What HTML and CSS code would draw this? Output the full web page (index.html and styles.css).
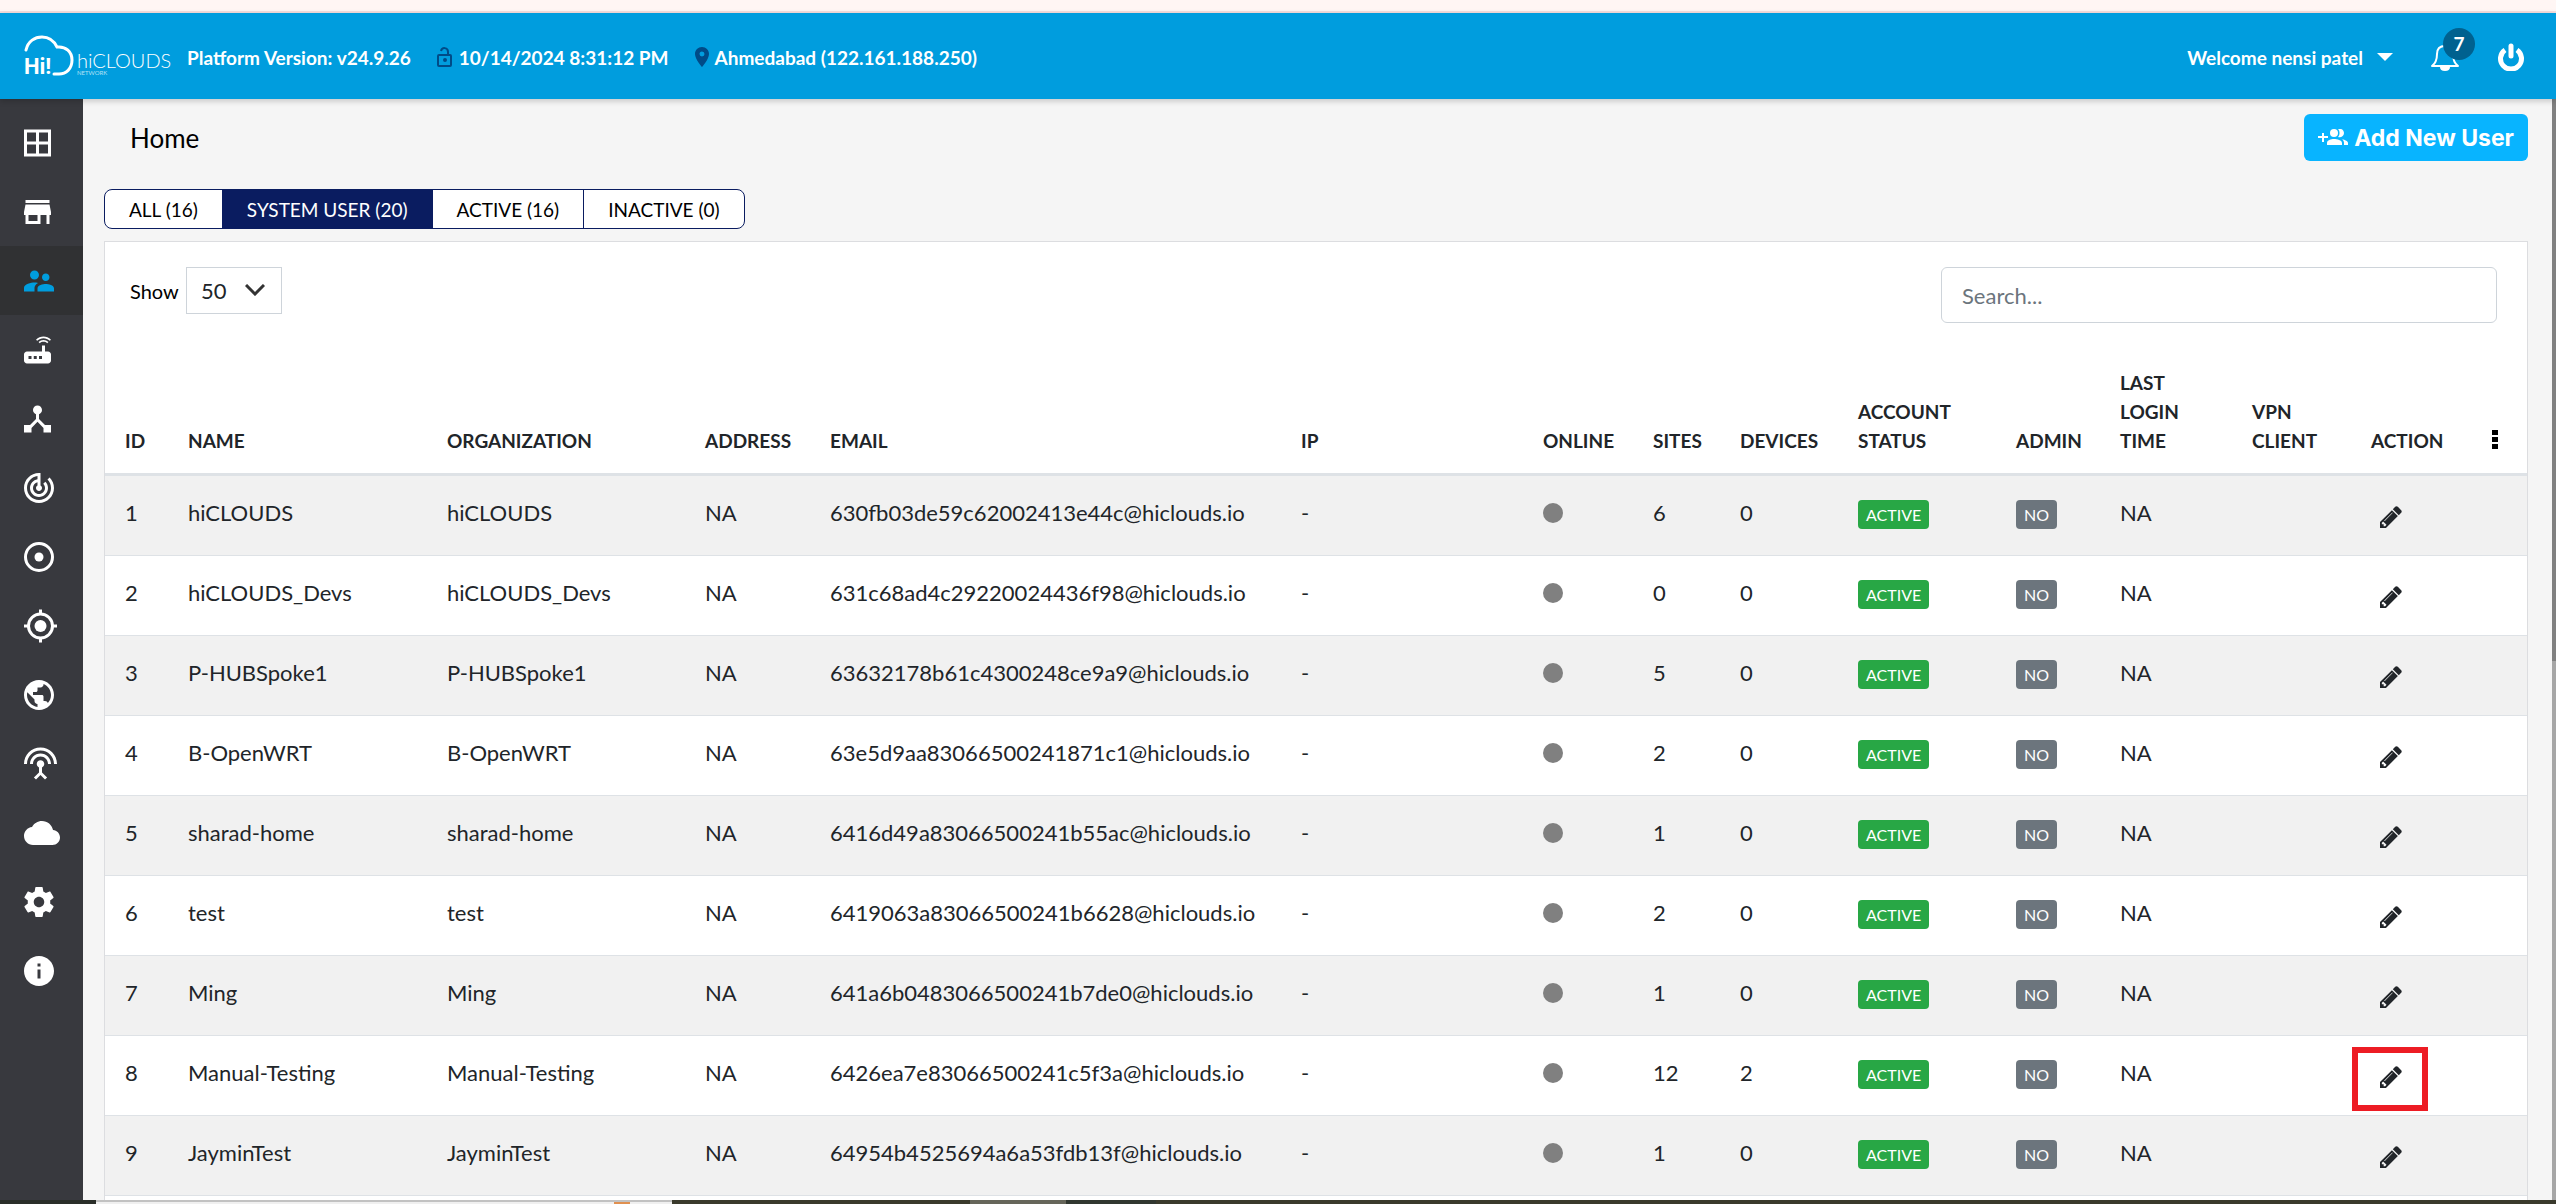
FILE: index.html
```html
<!DOCTYPE html>
<html lang="en">
<head>
<meta charset="utf-8">
<title>hiCLOUDS - Users</title>
<link rel="stylesheet" href="styles.css">
</head>
<body>
<svg class="sprite" aria-hidden="true">
  <symbol id="pencil" viewBox="128 128 1536 1536"><path d="M491 1536l91-91-235-235-91 91v107h128v128h107zm523-928q0-22-22-22-10 0-17 7l-542 542q-7 7-7 17 0 22 22 22 10 0 17-7l542-542q7-7 7-17zm-54-192l416 416-832 832h-416v-416zm683 96q0 53-37 90l-166 166-416-416 166-165q36-38 90-38 53 0 91 38l235 234q37 39 37 91z"/></symbol>
</svg>
<div class="page-edge"></div>
<header class="topbar">
  <a class="logo" href="#" aria-label="hiCLOUDS Network">
    <svg width="148" height="48" viewBox="0 0 148 48">
      <path d="M2 17C4 8 11 4 18 4c7 0 12 4 15 10 9-1 15 5 15 13 0 9-6 14-13 14h-5" fill="none" stroke="#fff" stroke-width="3" stroke-linecap="round"/>
      <text class="logo-hi" x="0" y="41">Hi!</text>
      <text class="logo-name" x="53" y="35">hiCLOUDS</text>
      <text class="logo-sub" x="53" y="42">NETWORK</text>
    </svg>
  </a>
  <span class="info">Platform Version: v24.9.26</span>
  <span class="info info-icon">
    <svg width="16" height="20" viewBox="0 0 16 20" fill="none" stroke="#004b87" stroke-width="2"><rect x="1" y="8" width="13" height="11" rx="1"/><path d="M4 4c1-4 7-4 7 1v3"/><circle cx="8" cy="13" r="1"/></svg>
    10/14/2024 8:31:12 PM</span>
  <span class="info info-icon">
    <svg width="14" height="20" viewBox="5 2 14 20" fill="#004b87"><path d="M12 2C8.13 2 5 5.13 5 9c0 5.25 7 13 7 13s7-7.75 7-13c0-3.87-3.13-7-7-7zm0 9.5a2.5 2.5 0 0 1 0-5 2.5 2.5 0 0 1 0 5z"/></svg>
    Ahmedabad (122.161.188.250)</span>
  <button class="welcome" type="button">Welcome nensi patel <span class="caret"></span></button>
  <button class="bell" type="button" aria-label="Notifications">
    <svg width="28" height="28" viewBox="0 0 28 28" fill="none" stroke="#fff" stroke-width="2" stroke-linejoin="round"><path d="M1 23c4-3 5-6 5-12 0-5 3-8 8-8s8 3 8 8c0 6 1 9 5 12z"/><path d="M10 24c0 4 8 4 8 0z" fill="#fff"/></svg>
    <span class="count">7</span>
  </button>
  <button class="power" type="button" aria-label="Log out">
    <svg width="28" height="28" viewBox="0 0 28 28" fill="none" stroke="#fff" stroke-width="5"><path d="M8 7a10.500 10.500 0 1 0 12 0"/><path d="M14 3v10" stroke-linecap="round"/></svg>
  </button>
</header>
<div class="body">
  <nav class="sidebar" aria-label="Main">
    <a href="#" aria-label="Dashboard"><svg viewBox="3 0 24 24"><path d="M3 3v18h18V3H3zm8 16H5v-6h6v6zm0-8H5V5h6v6zm8 8h-6v-6h6v6zm0-8h-6V5h6v6z"/></svg></a>
    <a href="#" aria-label="Sites"><svg viewBox="3 0 24 24"><path d="M20 4H4v2h16V4zm1 10v-2l-1-5H4l-1 5v2h1v6h10v-6h4v6h2v-6h1zm-9 4H6v-4h6v4z"/></svg></a>
    <a href="#" class="current" aria-label="Users"><svg viewBox="2 0 24 24"><path d="M16.500 12c1.380 0 2.490-1.120 2.490-2.500S17.880 7 16.500 7C15.120 7 14 8.120 14 9.500s1.120 2.500 2.500 2.500zM9 11c1.660 0 2.990-1.340 2.990-3S10.660 5 9 5C7.340 5 6 6.340 6 8s1.340 3 3 3zm7.500 3c-1.830 0-5.500.92-5.500 2.750V19h11v-2.250c0-1.830-3.670-2.750-5.500-2.750zM9 13c-2.330 0-7 1.170-7 3.500V19h7v-2.250c0-.85.33-2.340 2.370-3.470C10.500 13.100 9.660 13 9 13z"/></svg></a>
    <a href="#" aria-label="Devices"><svg viewBox="3 0 24 24"><path d="M20.200 5.900l.8-.8C19.600 3.700 17.800 3 16 3s-3.600.7-5 2.100l.8.8C13 4.800 14.500 4.200 16 4.200s3 .6 4.200 1.700zm-.9.8c-.9-.9-2.100-1.400-3.300-1.400s-2.400.5-3.300 1.400l.8.8c.7-.7 1.600-1 2.500-1 .9 0 1.800.3 2.500 1l.8-.8zM19 13h-2V9h-2v4H5c-1.100 0-2 .9-2 2v4c0 1.100.9 2 2 2h14c1.100 0 2-.9 2-2v-4c0-1.100-.9-2-2-2zM8 18H6v-2h2v2zm3.500 0h-2v-2h2v2zm3.500 0h-2v-2h2v2z"/></svg></a>
    <a href="#" aria-label="Network"><svg viewBox="3 0 24 24"><path d="M17 16l-4-4V8.820C14.160 8.400 15 7.300 15 6c0-1.660-1.340-3-3-3S9 4.340 9 6c0 1.300.84 2.400 2 2.820V12l-4 4H3v5h5v-3.050l4-4.200 4 4.200V21h5v-5h-4z"/></svg></a>
    <a href="#" aria-label="Tracking"><svg viewBox="2 0 24 24"><path d="M19.070 4.930l-1.410 1.410C19.100 7.790 20 9.790 20 12c0 4.420-3.580 8-8 8s-8-3.580-8-8c0-4.080 3.050-7.440 7-7.930v2.020C8.160 6.570 6 9.030 6 12c0 3.310 2.690 6 6 6s6-2.690 6-6c0-1.660-.67-3.160-1.760-4.240l-1.410 1.410C15.550 9.900 16 10.900 16 12c0 2.210-1.790 4-4 4s-4-1.790-4-4c0-1.860 1.280-3.410 3-3.860v2.140c-.6.35-1 .98-1 1.720 0 1.100.9 2 2 2s2-.9 2-2c0-.74-.4-1.380-1-1.720V2h-1C6.480 2 2 6.480 2 12s4.480 10 10 10 10-4.480 10-10c0-2.760-1.120-5.260-2.930-7.070z"/></svg></a>
    <a href="#" aria-label="Monitoring"><svg viewBox="2 0 24 24"><circle cx="12" cy="12" r="9" fill="none" stroke="#fff" stroke-width="2"/><circle cx="12" cy="12" r="3"/></svg></a>
    <a href="#" aria-label="Location"><svg viewBox="1 0 24 24"><circle cx="12" cy="12" r="8" fill="none" stroke="#fff" stroke-width="2"/><circle cx="12" cy="12" r="4"/><path d="M11 1h2v3h-2zM11 20h2v3h-2zM1 11h3v2H1zM20 11h3v2h-3z"/></svg></a>
    <a href="#" aria-label="Public"><svg viewBox="2 0 24 24"><path d="M12 2C6.480 2 2 6.480 2 12s4.480 10 10 10 10-4.480 10-10S17.520 2 12 2zm-1 17.930c-3.950-.49-7-3.850-7-7.930 0-.62.08-1.210.21-1.790L9 15v1c0 1.100.9 2 2 2v1.930zm6.900-2.540c-.26-.81-1-1.390-1.900-1.390h-1v-3c0-.55-.45-1-1-1H8v-2h2c.55 0 1-.45 1-1V7h2c1.100 0 2-.9 2-2v-.41c2.930 1.190 5 4.060 5 7.410 0 2.080-.8 3.970-2.100 5.390z"/></svg></a>
    <a href="#" aria-label="Antenna"><svg viewBox="1 0 24 24"><path d="M12 5c-3.870 0-7 3.130-7 7h2c0-2.760 2.240-5 5-5s5 2.240 5 5h2c0-3.870-3.130-7-7-7zm1 9.290c.88-.39 1.500-1.260 1.500-2.290 0-1.380-1.120-2.500-2.500-2.500S9.500 10.620 9.500 12c0 1.020.62 1.900 1.500 2.290v3.300L7.590 21 9 22.410l3-3 3 3L16.410 21 13 17.590v-3.300zM12 1C5.930 1 1 5.930 1 12h2c0-4.970 4.030-9 9-9s9 4.030 9 9h2c0-6.070-4.930-11-11-11z"/></svg></a>
    <a href="#" aria-label="Cloud"><svg viewBox="0 0 24 24"><path d="M19.350 10.040C18.670 6.590 15.640 4 12 4 9.110 4 6.600 5.640 5.350 8.040 2.340 8.360 0 10.910 0 14c0 3.310 2.690 6 6 6h13c2.760 0 5-2.240 5-5 0-2.640-2.050-4.780-4.650-4.960z"/></svg></a>
    <a href="#" aria-label="Settings"><svg viewBox="2 0 24 24"><path d="M19.430 12.980c.04-.32.07-.64.07-.98s-.03-.66-.07-.98l2.110-1.650c.19-.15.24-.42.12-.64l-2-3.460c-.12-.22-.39-.3-.61-.22l-2.490 1c-.52-.4-1.080-.73-1.690-.98l-.38-2.650C14.460 2.180 14.250 2 14 2h-4c-.25 0-.46.18-.49.42l-.38 2.650c-.61.25-1.170.59-1.690.98l-2.490-1c-.23-.09-.49 0-.61.22l-2 3.460c-.13.22-.07.49.12.64l2.110 1.650c-.04.32-.07.65-.07.98s.03.66.07.98l-2.110 1.650c-.19.15-.24.42-.12.64l2 3.460c.12.22.39.3.61.22l2.490-1c.52.4 1.080.73 1.690.98l.38 2.650c.03.24.24.42.49.42h4c.25 0 .46-.18.49-.42l.38-2.650c.61-.25 1.170-.59 1.690-.98l2.490 1c.23.09.49 0 .61-.22l2-3.460c.12-.22.07-.49-.12-.64l-2.110-1.650zM12 15.500c-1.930 0-3.500-1.570-3.500-3.500s1.570-3.500 3.500-3.500 3.500 1.570 3.500 3.500-1.570 3.500-3.500 3.500z"/></svg></a>
    <a href="#" aria-label="About"><svg viewBox="2 0 24 24"><path d="M12 2C6.480 2 2 6.480 2 12s4.480 10 10 10 10-4.480 10-10S17.520 2 12 2zm1 15h-2v-6h2v6zm0-8h-2V7h2v2z"/></svg></a>
  </nav>
  <main class="content">
    <div class="title-row">
      <h1>Home</h1>
      <button class="add-user" type="button">
        <svg width="30" height="17" viewBox="0 0 30 17" fill="#fff"><path d="M4 4h2v3h4v2H6v4H4V9H0V7h4z"/><circle cx="16" cy="4" r="4"/><path d="M9 16v-2c0-3 4-4 7-4s8 1 8 4v2zM20 0c3-1 6 1 6 4s-3 5-6 4c2-2 2-6 0-8zM24 10c3 1 6 2 6 4v2h-4v-2c0-2-1-3-2-4z"/></svg>
        Add New User</button>
    </div>
    <div class="tabs">
      <button type="button">ALL (16)</button>
      <button type="button" class="selected">SYSTEM USER (20)</button>
      <button type="button">ACTIVE (16)</button>
      <button type="button">INACTIVE (0)</button>
    </div>
    <section class="card">
      <div class="toolbar">
        <label for="page-size">Show</label>
        <span class="select-box">
          <select id="page-size"><option>50</option></select>
          <svg width="20" height="12" viewBox="0 0 20 12" fill="none" stroke="#333" stroke-width="3"><path d="M1 1l9 9 9-9"/></svg>
        </span>
        <input class="search" type="search" placeholder="Search..." aria-label="Search">
      </div>
      <table>
        <colgroup>
          <col class="w-id"><col class="w-name"><col class="w-org"><col class="w-address"><col class="w-email"><col class="w-ip"><col class="w-online"><col class="w-sites"><col class="w-devices"><col class="w-status"><col class="w-admin"><col class="w-login"><col class="w-vpn"><col class="w-action"><col class="w-more">
        </colgroup>
        <thead><tr><th>ID</th><th>NAME</th><th>ORGANIZATION</th><th>ADDRESS</th><th>EMAIL</th><th>IP</th><th>ONLINE</th><th>SITES</th><th>DEVICES</th><th>ACCOUNT STATUS</th><th>ADMIN</th><th>LAST LOGIN TIME</th><th>VPN CLIENT</th><th>ACTION</th><th><button class="more" type="button" aria-label="Columns"><svg width="6" height="22" viewBox="0 0 6 22"><path d="M0 1h6v5H0zM0 8h6v5H0zM0 15h6v5H0z"/></svg></button></th></tr></thead>
        <tbody id="rows"></tbody>
      </table>
    </section>
  </main>
  <div class="scrollbar"><div class="thumb"></div></div>
</div>
<footer class="taskbar"><div class="task-start"></div><div class="task-search"><i></i></div><div class="task-gap"></div><div class="task-light"></div><div class="task-dark"></div><div class="task-rest"></div></footer>
<script src="users.js"></script>
</body>
</html>
```
FILE: styles.css
```css
*, *::after { box-sizing: border-box; }

body {
  margin: 0;
  height: 100vh;
  overflow: hidden;
  display: flex;
  flex-direction: column;
  background: #f5f5f5;
  color: #212529;
  font: 20px/29px Lato, "Open Sans", sans-serif;
}

button, input, select { font: inherit; color: inherit; }
button { border: 0; padding: 0; background: none; }
svg { display: block; flex: none; }
.sprite { display: none; }

.page-edge {
  flex: none;
  height: 13px;
  background: #fff6f4;
  border-bottom: 2px solid #f5dedd;
}

.topbar {
  flex: none;
  height: 86px;
  display: flex;
  align-items: center;
  padding: 2px 31px 0 24px;
  background: #009dde;
  color: #fff;
  font-size: 19px;
  font-weight: 700;
  box-shadow: 0 2px 6px rgba(0, 0, 0, .2);
  z-index: 1;
}
.logo { margin-right: 15px; }
.logo-hi { font: 700 22px Roboto, sans-serif; fill: #fff; }
.logo-name { font: 300 20px Lato, sans-serif; fill: #fff; }
.logo-sub { font: 400 6px Lato, sans-serif; fill: #b5e1f5; }
.info { margin-right: 26px; white-space: nowrap; }
.info-icon { display: flex; align-items: center; gap: 6px; }
.welcome { display: flex; align-items: center; gap: 14px; margin-left: auto; font-weight: 700; }
.caret { border: 8px solid transparent; border-top-color: #fff; border-bottom: 0; }
.bell { position: relative; margin-left: 38px; }
.count {
  position: absolute;
  left: 12px;
  top: -15px;
  width: 32px;
  height: 32px;
  border-radius: 50%;
  background: #00618f;
  line-height: 32px;
  font-weight: 700;
}
.power { margin-left: 38px; }

.body { flex: 1; min-height: 0; display: flex; }

.sidebar { flex: none; width: 83px; padding-top: 9px; background: #38393e; }
.sidebar a { display: flex; align-items: center; height: 69px; padding-left: 24px; }
.sidebar svg { width: 36px; height: 36px; fill: #fff; }
.sidebar .current { background: #303133; }
.sidebar .current svg { fill: #009dde; }

.content {
  flex: 1;
  min-width: 0;
  display: flex;
  flex-direction: column;
  padding: 15px 24px 0 21px;
  overflow: hidden;
}
.title-row { display: flex; justify-content: space-between; align-items: center; padding-left: 26px; }
h1 { margin: 0; color: #000; font-size: 26px; line-height: 32px; font-weight: 400; }
.add-user {
  display: flex;
  align-items: center;
  gap: 6px;
  height: 47px;
  padding: 0 14px;
  border-radius: 6px;
  background: #08b4ff;
  color: #fff;
  font: 700 23px "Inter", sans-serif;
}

.tabs {
  display: flex;
  align-self: flex-start;
  margin: 28px 0 12px;
  border: 1px solid #0a1c60;
  border-radius: 8px;
  overflow: hidden;
  background: #fff;
  color: #000;
  font-size: 19px;
}
.tabs button { height: 38px; padding: 0 24px; }
.tabs button + button { border-left: 1px solid #0a1c60; }
.tabs .selected { background: #0a1c60; color: #fff; }

.card { flex: 1; background: #fff; border: 1px solid #dcdde0; border-bottom: 0; }
.toolbar { display: flex; align-items: flex-start; padding: 25px 30px 24px 25px; }
.toolbar label { margin-top: 10px; width: 56px; color: #000; }
.select-box { position: relative; }
.select-box select {
  appearance: none;
  width: 96px;
  height: 47px;
  padding: 0 14px;
  border: 1px solid #ced4da;
  border-radius: 0;
  background: #fff;
  font-size: 22px;
}
.select-box svg { position: absolute; right: 17px; top: 17px; pointer-events: none; }
.search {
  width: 556px;
  height: 56px;
  margin-left: auto;
  padding: 0 20px;
  border: 1px solid #ced4da;
  border-radius: 6px;
  font-size: 22px;
}
.search::placeholder { color: #6c757d; }

table { width: 100%; table-layout: fixed; border-collapse: separate; border-spacing: 0; }
th {
  padding: 21px 20px 18px;
  border-bottom: 3px solid #dee2e6;
  text-align: left;
  vertical-align: bottom;
  font-size: 19px;
  font-weight: 700;
}
th:nth-child(n+10) { padding-right: 35px; }
th:nth-child(11), th:nth-child(13), th:nth-child(14), th:last-child { padding-right: 0; }
td {
  height: 80px;
  padding: 0 0 6px 20px;
  border-bottom: 1px solid #dee2e6;
  font-size: 22px;
  white-space: nowrap;
}
tbody tr:nth-child(odd) { background: #f1f1f1; }
.w-id { width: 63px; }
.w-name { width: 259px; }
.w-org { width: 258px; }
.w-address { width: 125px; }
.w-email { width: 471px; }
.w-ip { width: 242px; }
.w-online { width: 110px; }
.w-sites { width: 87px; }
.w-devices { width: 118px; }
.w-status { width: 158px; }
.w-admin { width: 104px; }
.w-login { width: 132px; }
.w-vpn { width: 119px; }
.w-action { width: 117px; }
.w-more { width: 59px; }

.dot { display: block; width: 20px; height: 20px; border-radius: 50%; background: #808080; }
.badge {
  display: block;
  width: fit-content;
  margin-top: 4px;
  padding: 0 8px;
  border-radius: 4px;
  background: #28a745;
  color: #fff;
  font-size: 16px;
  line-height: 29px;
}
.badge.no { background: #6c757d; }
.edit { display: block; margin: 8px 0 0 9px; }
.edit svg { width: 22px; height: 22px; fill: #212529; }
.marked { position: relative; }
.marked::after {
  content: "";
  position: absolute;
  left: 1px;
  top: 11px;
  width: 76px;
  height: 64px;
  border: 6px solid #ed1c24;
}
.more { display: block; margin: 0 0 4px 4px; }

.scrollbar { flex: none; width: 4px; background: #a6a6a6; }
.thumb { height: 51%; background: #808080; }

.taskbar { flex: none; display: flex; height: 4px; background: #3a3a2c; }
.task-start { flex: 96; background: #2a2e29; }
.task-search { flex: 576; background: #f0f0f0; border-top: 2px solid #c2c2c2; }
.task-search i { display: block; width: 16px; height: 2px; margin-left: 90%; background: #e09050; }
.task-gap { flex: 298; }
.task-light { flex: 96; background: #66665a; }
.task-dark { flex: 90; background: #313730; }
.task-rest { flex: 1400; }
```
FILE: users.js
```js
const users = [
  ["hiCLOUDS", "630fb03de59c62002413e44c", 6, 0],
  ["hiCLOUDS_Devs", "631c68ad4c29220024436f98", 0, 0],
  ["P-HUBSpoke1", "63632178b61c4300248ce9a9", 5, 0],
  ["B-OpenWRT", "63e5d9aa83066500241871c1", 2, 0],
  ["sharad-home", "6416d49a83066500241b55ac", 1, 0],
  ["test", "6419063a83066500241b6628", 2, 0],
  ["Ming", "641a6b0483066500241b7de0", 1, 0],
  ["Manual-Testing", "6426ea7e83066500241c5f3a", 12, 2],
  ["JayminTest", "64954b4525694a6a53fdb13f", 1, 0],
];
const markedId = 8;

document.getElementById("rows").innerHTML = users.map(([name, key, sites, devices], i) => `
  <tr>
    <td>${i + 1}</td><td>${name}</td><td>${name}</td><td>NA</td>
    <td>${key}@hiclouds.io</td><td>-</td>
    <td><span class="dot"></span></td><td>${sites}</td><td>${devices}</td>
    <td><span class="badge">ACTIVE</span></td><td><span class="badge no">NO</span></td>
    <td>NA</td><td></td>
    <td class="${i + 1 === markedId ? "marked" : ""}"><button class="edit" type="button" aria-label="Edit ${name}"><svg><use href="#pencil"/></svg></button></td>
    <td></td>
  </tr>`).join("");
```
